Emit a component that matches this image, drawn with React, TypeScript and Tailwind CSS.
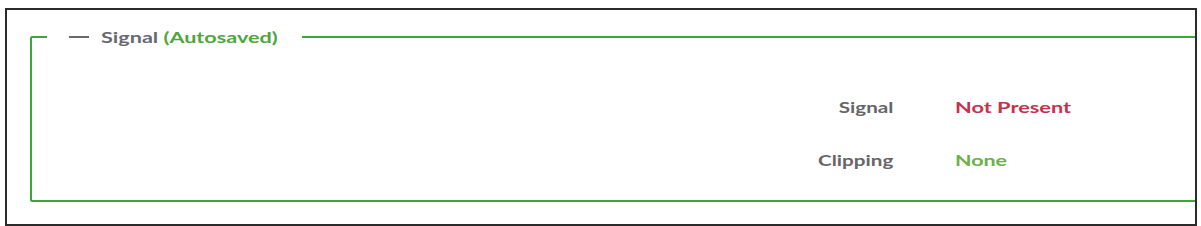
import React from "react";

export default function App() {
  return (
    <div className="w-[1201px] h-[226px] bg-white pt-[8px] pl-[5px] font-['Lato',sans-serif]">
      <div className="w-[1192px] h-[218px] border-2 border-[#2b2b2b] overflow-hidden bg-white">
        <fieldset className="ml-[23px] mt-[17px] w-[1300px] h-[175px] border-2 border-[#3aa935] rounded-[2px] p-0 m-0">
          <legend className="ml-[15px] w-[255px] p-0 flex items-center text-[16px] font-bold leading-[20px]">
            <span className="inline-block w-[20px] h-[2px] bg-[#666a70] ml-[22px] mr-[12px]" />
            <span className="inline-block whitespace-nowrap origin-left scale-x-[1.35]">
              <span className="text-[#666a70]">Signal</span>
              <span className="text-[#4ea63d]"> (Autosaved)</span>
            </span>
          </legend>
          <div className="grid grid-cols-[861px_auto] gap-x-[62px] gap-y-[29px] mt-[48px] text-[16px] font-bold leading-[24px]">
            <div className="text-right text-[#666]">
              <span className="inline-block origin-right scale-x-[1.29]">Signal</span>
            </div>
            <div className="text-[#c4334b]">
              <span className="inline-block origin-left scale-x-[1.36]">Not Present</span>
            </div>
            <div className="text-right text-[#666]">
              <span className="inline-block origin-right scale-x-[1.29]">Clipping</span>
            </div>
            <div className="text-[#6bb04a]">
              <span className="inline-block origin-left scale-x-[1.34]">None</span>
            </div>
          </div>
        </fieldset>
      </div>
    </div>
  );
}
